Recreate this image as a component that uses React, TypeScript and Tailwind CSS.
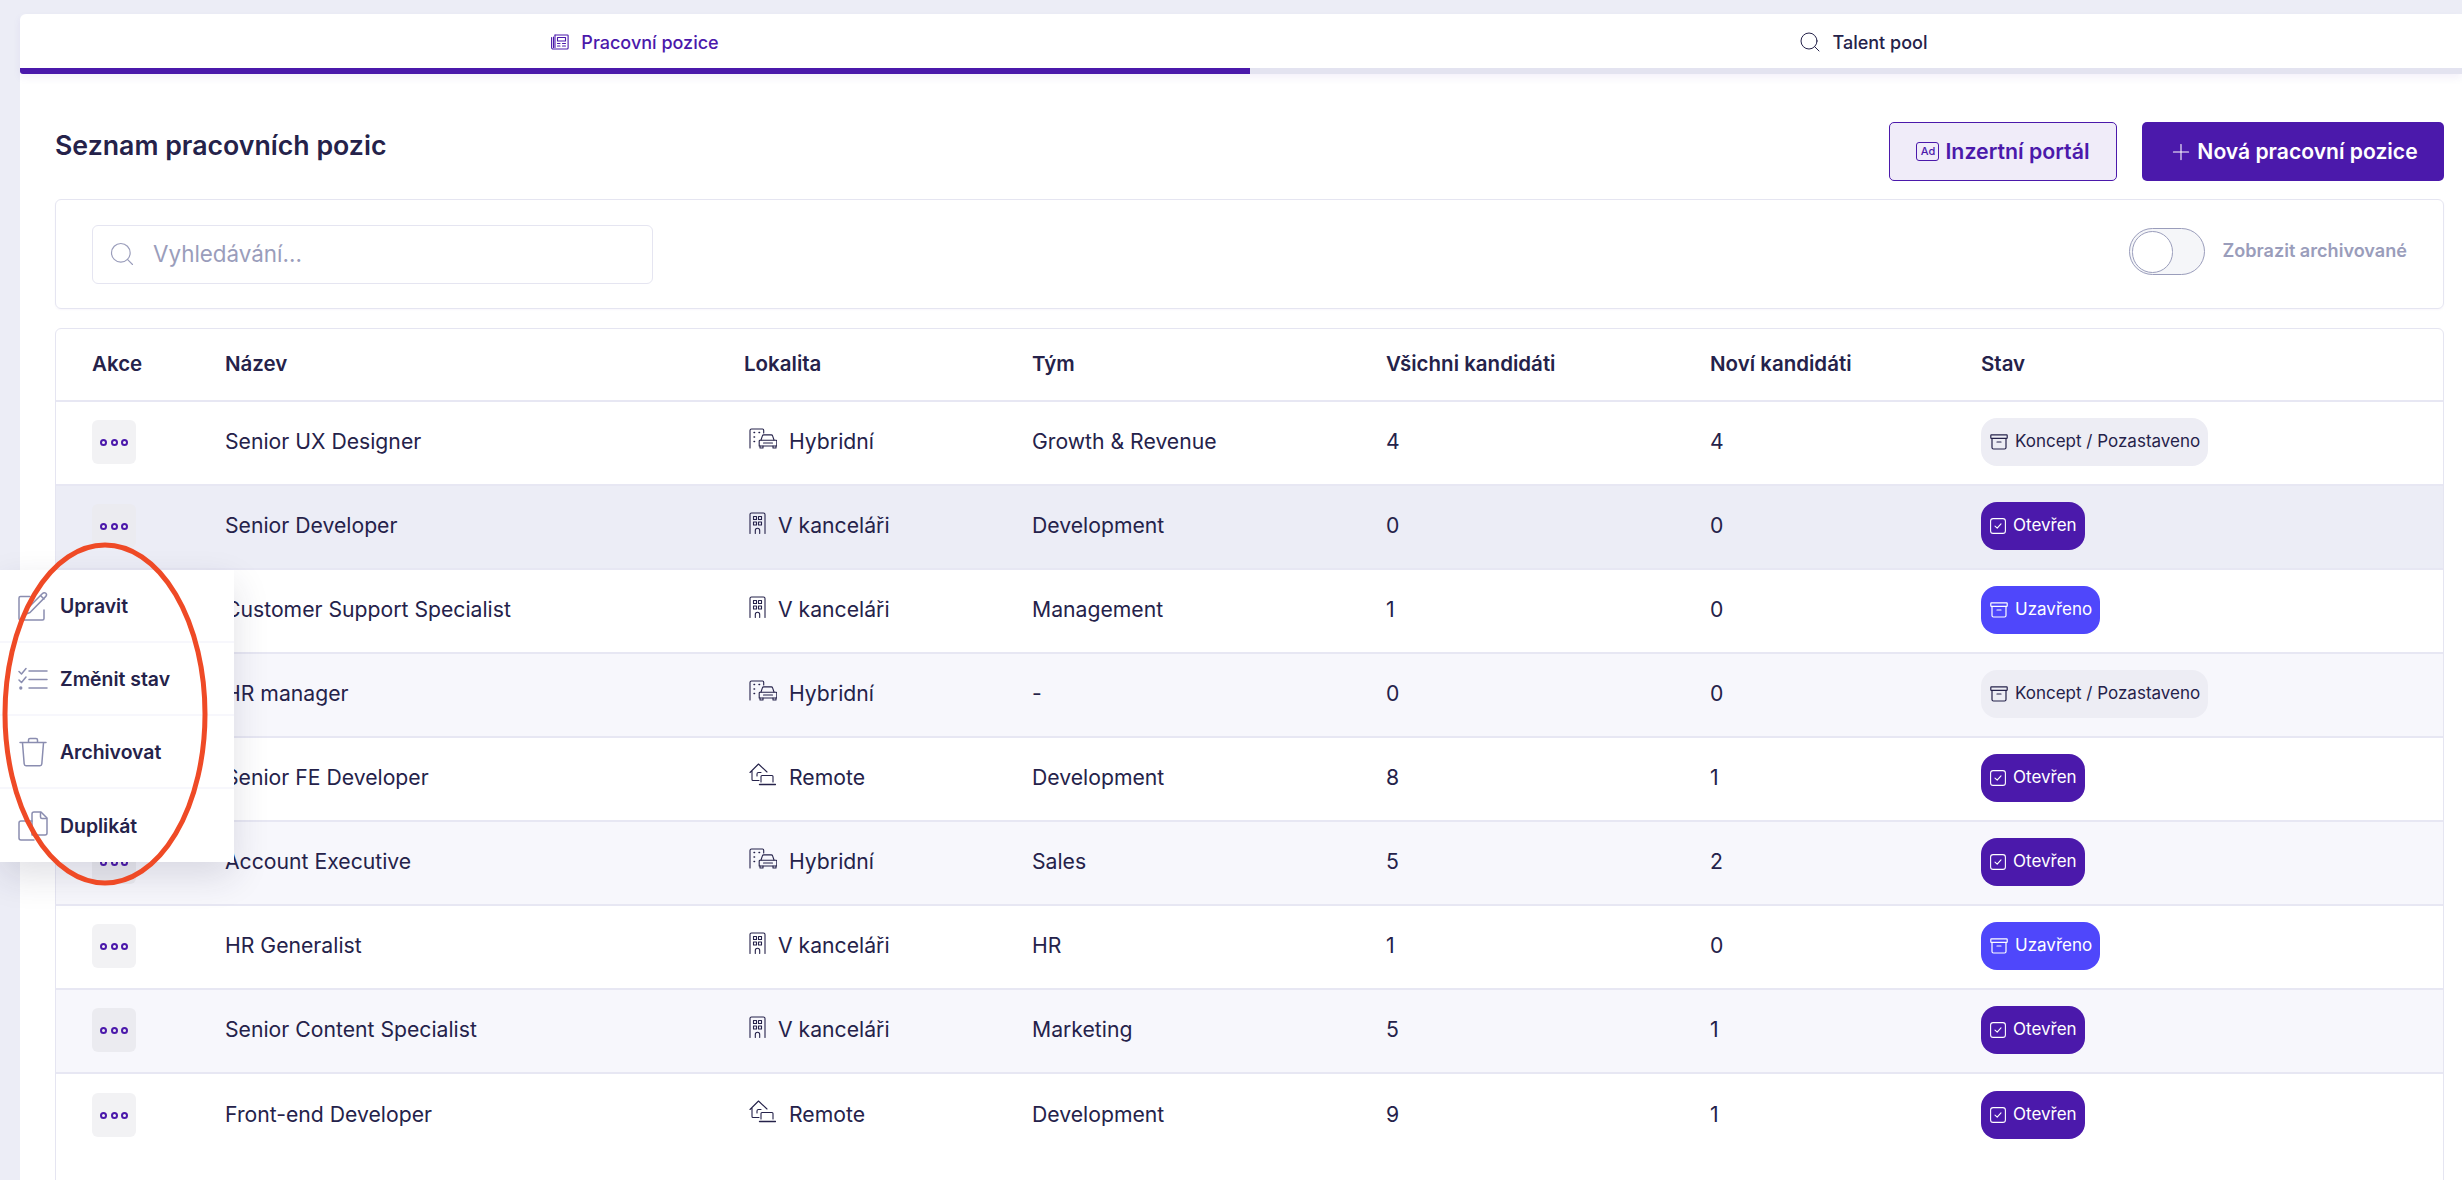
import { Plus, Search } from "lucide-react";

type Place = "hybrid" | "office" | "remote";
type Status = "draft" | "open" | "closed";

const jobs: { name: string; place: Place; team: string; all: number; fresh: number; status: Status }[] = [
  { name: "Senior UX Designer", place: "hybrid", team: "Growth & Revenue", all: 4, fresh: 4, status: "draft" },
  { name: "Senior Developer", place: "office", team: "Development", all: 0, fresh: 0, status: "open" },
  { name: "Customer Support Specialist", place: "office", team: "Management", all: 1, fresh: 0, status: "closed" },
  { name: "HR manager", place: "hybrid", team: "-", all: 0, fresh: 0, status: "draft" },
  { name: "Senior FE Developer", place: "remote", team: "Development", all: 8, fresh: 1, status: "open" },
  { name: "Account Executive", place: "hybrid", team: "Sales", all: 5, fresh: 2, status: "open" },
  { name: "HR Generalist", place: "office", team: "HR", all: 1, fresh: 0, status: "closed" },
  { name: "Senior Content Specialist", place: "office", team: "Marketing", all: 5, fresh: 1, status: "open" },
  { name: "Front-end Developer", place: "remote", team: "Development", all: 9, fresh: 1, status: "open" },
];

const placeLabels: Record<Place, string> = { hybrid: "Hybridní", office: "V kanceláři", remote: "Remote" };

const gridCols = "grid grid-cols-[133px_519px_288px_354px_324px_271px_1fr] items-center pl-[36px]";

function HybridIcon() {
  return (
    <svg width="28" height="22" viewBox="0 0 28 22" fill="none" stroke="currentColor" strokeWidth="1.1" strokeLinecap="round" strokeLinejoin="round">
      <path d="M1 20V2.500C1 1.700 1.600 1 2.500 1H13.500C14.200 1 14.700 1.500 14.700 2.200V5" />
      <path d="M5 4.500h.6M10 4.500h.6M5 9h.6M5 13.500h.6" strokeWidth="1.400" />
      <path d="M12 12l1.400-4.200c.2-.6.7-.9 1.300-.9h7.600c.6 0 1.100.3 1.300.9L25 12" />
      <path d="M11 12.200h16c.5 0 .8.400.8.800v5H10.200v-5c0-.4.300-.8.800-.8Z" />
      <path d="M11 18v2h3v-2M24 18v2h3v-2M14.500 15h9" />
    </svg>
  );
}

function OfficeIcon() {
  return (
    <svg width="17" height="22" viewBox="0 0 17 22" fill="none" stroke="currentColor" strokeWidth="1.1" strokeLinecap="round" strokeLinejoin="round">
      <path d="M1 21.500V2.500C1 1.600 1.600 1 2.500 1h12c.9 0 1.500.6 1.500 1.500V21.500" />
      <rect x="4.500" y="4.500" width="3" height="3" />
      <rect x="9.500" y="4.500" width="3" height="3" />
      <rect x="4.500" y="10" width="3" height="3" />
      <rect x="9.500" y="10" width="3" height="3" />
      <path d="M6.300 21.500v-3a2.200 2.200 0 0 1 4.400 0v3" />
    </svg>
  );
}

function RemoteIcon() {
  return (
    <svg width="27" height="23" viewBox="0 0 27 23" fill="none" stroke="currentColor" strokeWidth="1.1" strokeLinecap="round" strokeLinejoin="round">
      <path d="M1 9.500 9.500 1 18 9M3 8v8.500c0 .6.400 1 1 1h6" />
      <path d="M12 9.500H9.500A1.500 1.500 0 0 0 8 11v2" />
      <path d="M12 19V13.500c0-.6.400-1 1-1h10c.6 0 1 .4 1 1V19" />
      <path d="M10.500 21.500h16" strokeWidth="1.400" />
    </svg>
  );
}

function PlaceIcon({ place }: { place: Place }) {
  if (place === "hybrid") return <HybridIcon />;
  if (place === "office") return <OfficeIcon />;
  return <RemoteIcon />;
}

function BoxIcon() {
  return (
    <svg width="18" height="16" viewBox="0 0 18 16" fill="none" stroke="currentColor" strokeWidth="1.200" strokeLinecap="round" strokeLinejoin="round">
      <rect x="0.800" y="0.800" width="16.400" height="3.600" rx="0.600" />
      <path d="M2 4.500V13.500c0 .9.600 1.500 1.500 1.500h11c.9 0 1.500-.6 1.500-1.500V4.500M7 8h4" />
    </svg>
  );
}

function CheckBoxIcon() {
  return (
    <svg width="16" height="16" viewBox="0 0 16 16" fill="none" stroke="currentColor" strokeWidth="1.100" strokeLinecap="round" strokeLinejoin="round">
      <rect x="0.600" y="0.600" width="14.800" height="14.800" rx="2.500" />
      <path d="M5 8.200 7.200 10.200 11 5.800" />
    </svg>
  );
}

function StatusBadge({ status }: { status: Status }) {
  if (status === "open") {
    return (
      <span className="inline-flex h-[48px] w-[104px] items-center gap-[7px] rounded-[16px] bg-[#4b19ab] pl-[9px] text-[17px] text-white">
        <CheckBoxIcon />
        Otevřen
      </span>
    );
  }
  if (status === "closed") {
    return (
      <span className="inline-flex h-[48px] w-[119px] items-center gap-[7px] rounded-[16px] bg-[#4f47fb] pl-[9px] text-[17px] text-white">
        <BoxIcon />
        Uzavřeno
      </span>
    );
  }
  return (
    <span className="inline-flex h-[48px] w-[227px] items-center gap-[7px] rounded-[16px] bg-[#ededf4] pl-[9px] text-[17px] text-[#25224a]">
      <BoxIcon />
      Koncept / Pozastaveno
    </span>
  );
}

function NewsIcon() {
  return (
    <svg width="18" height="16" viewBox="0 0 18 16" fill="none" stroke="currentColor" strokeWidth="1.100" strokeLinecap="round" strokeLinejoin="round">
      <path d="M4 1h12.500c.3 0 .6.300.6.600V14c0 .6-.4 1-1 1H2a1.400 1.400 0 0 1-1.400-1.400V3.500" />
      <path d="M2.500 3v10.500M4 1v12.500" />
      <rect x="6.500" y="3.500" width="8" height="3.500" />
      <path d="M6.500 9.500h2.500M11.500 9.500h3M6.500 12h2.500M11.500 12h3" />
    </svg>
  );
}

function MenuIcon({ kind }: { kind: string }) {
  const base = { fill: "none", stroke: "#8a8db0", strokeWidth: 1.500, strokeLinecap: "round" as const, strokeLinejoin: "round" as const };
  if (kind === "edit") {
    return (
      <svg width="30" height="30" viewBox="0 0 30 30" {...base}>
        <path d="M12 5.500H2.500A1.500 1.500 0 0 0 1 7v20.500A1.500 1.500 0 0 0 2.500 29h22a1.500 1.500 0 0 0 1.500-1.500V19" />
        <path d="M7 23.500 9 18 24.500 2.500c1-1 2.500-1 3.300-.2s.8 2.300-.2 3.300L12 21.500Z" />
        <path d="M22.500 4.500 26 8" />
      </svg>
    );
  }
  if (kind === "list") {
    return (
      <svg width="30" height="24" viewBox="0 0 30 24" {...base}>
        <path d="M1 4.500 3.500 7 8 1.500M1 13 3.500 15.500 8 10" />
        <circle cx="2.800" cy="21" r="0.900" fill="#8a8db0" />
        <path d="M11 4h18M11 12.500h18M11 21h18" />
      </svg>
    );
  }
  if (kind === "trash") {
    return (
      <svg width="28" height="30" viewBox="0 0 28 30" {...base}>
        <path d="M1 5.500h26M9.500 5.500V3a1.500 1.500 0 0 1 1.500-1.500h6A1.500 1.500 0 0 1 18.500 3v2.500" />
        <path d="M3.500 6l1.700 21c.1 1 .8 1.700 1.800 1.700h14c1 0 1.700-.7 1.800-1.700L24.500 6" />
      </svg>
    );
  }
  return (
    <svg width="30" height="30" viewBox="0 0 30 30" {...base}>
      <path d="M16 29H3a2 2 0 0 1-2-2V12a2 2 0 0 1 2-2h11" />
      <path d="M14 24V3a2 2 0 0 1 2-2h7l6 6v15a2 2 0 0 1-2 2H14Z" />
      <path d="M22.500 1.500V6a1.500 1.500 0 0 0 1.500 1.500h4.500" />
    </svg>
  );
}

const menuItems = [
  { label: "Upravit", icon: "edit" },
  { label: "Změnit stav", icon: "list" },
  { label: "Archivovat", icon: "trash" },
  { label: "Duplikát", icon: "copy" },
];

export default function App() {
  return (
    <div className="relative h-[1180px] overflow-hidden bg-[#ecedf6] pl-[20px] pt-[14px] font-['Inter',sans-serif] text-[#25224a]">
      <div className="h-full rounded-tl-[6px] bg-white">
        {/* Tabs */}
        <div className="flex h-[60px] shadow-[0_4px_8px_rgba(75,25,171,0.06)]">
          <div className="flex h-full w-[1230px] items-center justify-center gap-[12px] rounded-l-[3px] border-b-[6px] border-[#4b19ab] pt-[2px] text-[18px] font-medium text-[#4b19ab]">
            <NewsIcon />
            Pracovní pozice
          </div>
          <div className="flex h-full flex-1 items-center justify-center gap-[11px] border-b-[6px] border-[#e3e3f0] pl-[13px] pt-[2px] text-[18px] font-medium">
            <Search size={24} strokeWidth={1} />
            Talent pool
          </div>
        </div>

        <div className="pl-[35px] pr-[18px]">
          {/* Heading */}
          <div className="flex h-[125px] items-start justify-between pt-[48px]">
            <h1 className="mt-[3px] text-[26.700px] leading-[40px] font-semibold">Seznam pracovních pozic</h1>
            <div className="flex gap-[25px]">
              <button className="flex h-[59px] w-[228px] items-center justify-center gap-[6px] rounded-[5px] border border-[#4b19ab] bg-[#f0ecf9] text-[21.300px] font-semibold text-[#4b19ab]">
                <span className="flex h-[19px] w-[23px] items-center justify-center rounded-[3px] border border-[#4b19ab] text-[11px] font-medium">Ad</span>
                Inzertní portál
              </button>
              <button className="flex h-[59px] w-[302px] items-center justify-center gap-[3px] rounded-[5px] bg-[#4b19ab] text-[21.100px] font-semibold text-white">
                <Plus size={26} strokeWidth={1} />
                Nová pracovní pozice
              </button>
            </div>
          </div>

          {/* Filter */}
          <div className="flex h-[110px] items-center justify-between rounded-[6px] border border-[#e5e5f1] pl-[36px] pr-[36px] shadow-[0_1px_2px_rgba(75,25,171,0.04)]">
            <div className="flex h-[59px] w-[561px] items-center gap-[17px] rounded-[6px] border border-[#e5e5f1] pl-[15px] text-[22.400px] text-[#9a9dbb]">
              <Search size={28} strokeWidth={1} />
              Vyhledávání...
            </div>
            <div className="mb-[5px] flex items-center gap-[17px]">
              <div className="flex h-[47px] w-[76px] items-center rounded-full border border-[#9a9dbb] bg-[#f5f6f9] pl-[2px]">
                <div className="h-[42px] w-[41px] rounded-full border border-[#9a9dbb] bg-white" />
              </div>
              <span className="mt-[-2px] text-[18.100px] font-semibold text-[#9a9dbb]">Zobrazit archivované</span>
            </div>
          </div>

          {/* Table */}
          <div className="mt-[19px] rounded-[6px] border border-[#e5e5f1] pb-[60px]">
            <div className={`${gridCols} h-[73px] border-b-2 border-[#e7e7f3] text-[20.500px] font-semibold`}>
              <div>Akce</div>
              <div>Název</div>
              <div>Lokalita</div>
              <div>Tým</div>
              <div>Všichni kandidáti</div>
              <div>Noví kandidáti</div>
              <div>Stav</div>
            </div>
            {jobs.map((job, i) => (
              <div
                key={job.name}
                className={`${gridCols} h-[84px] ${i < jobs.length - 1 ? "border-b-2 border-[#e7e7f3]" : ""} ${i === 1 ? "bg-[#ecedf6]" : i % 2 === 1 ? "bg-[#f7f7fc]" : "bg-white"} pb-[2px] text-[21.200px]`}
              >
                <div>
                  <div className={`flex h-[44px] w-[44px] items-center justify-center gap-[3.500px] rounded-[6px] ${i % 2 === 1 ? "bg-[#ebebf0]" : "bg-[#f2f2f4]"}`}>
                    <span className="h-[7px] w-[7px] rounded-full border-2 border-[#4b19ab]" />
                    <span className="h-[7px] w-[7px] rounded-full border-2 border-[#4b19ab]" />
                    <span className="h-[7px] w-[7px] rounded-full border-2 border-[#4b19ab]" />
                  </div>
                </div>
                <div>{job.name}</div>
                <div className={`flex items-center pl-[5px] ${job.place === "remote" ? "gap-[13px]" : "gap-[12px]"}`}>
                  <span className="mt-[-6px]">
                    <PlaceIcon place={job.place} />
                  </span>
                  {placeLabels[job.place]}
                </div>
                <div>{job.team}</div>
                <div>{job.all}</div>
                <div>{job.fresh}</div>
                <div className="flex">
                  <StatusBadge status={job.status} />
                </div>
              </div>
            ))}
          </div>
        </div>
      </div>

      {/* Row menu */}
      <div className="absolute left-0 top-[570px] w-[234px] bg-white shadow-[0_14px_34px_rgba(37,34,74,0.14)]">
        {menuItems.map((item, i) => (
          <div
            key={item.label}
            className={`flex h-[73px] items-center ${i < menuItems.length - 1 ? "border-b-2 border-[#f7f7fc]" : ""} text-[19.400px] font-semibold`}
          >
            <span className="flex w-[60px] justify-center pl-[6px]">
              <MenuIcon kind={item.icon} />
            </span>
            <span className="mt-[3px]">{item.label}</span>
          </div>
        ))}
      </div>

      {/* Red ring drawn over the menu */}
      <svg className="pointer-events-none absolute left-0 top-[540px]" width="212" height="348" viewBox="0 0 212 348" fill="none">
        <ellipse cx="105" cy="174" rx="100" ry="169" stroke="#ef4a26" strokeWidth="5" />
      </svg>
    </div>
  );
}
